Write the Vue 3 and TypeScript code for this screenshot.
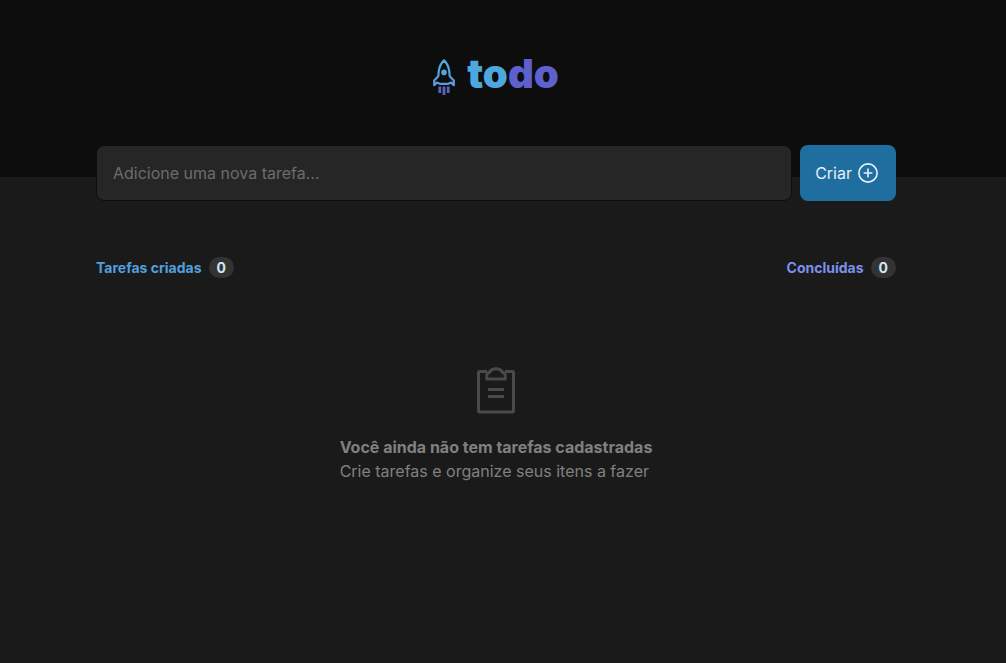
<script setup lang="ts">
import { computed, ref } from 'vue'

interface Task {
  id: number
  title: string
  done: boolean
}

const tasks = ref<Task[]>([])
const title = ref('')
const doneCount = computed(() => tasks.value.filter((task) => task.done).length)

function createTask(): void {
  const text = title.value.trim()
  if (!text) return
  tasks.value.push({ id: Date.now(), title: text, done: false })
  title.value = ''
}
</script>

<template>
  <div class="page">
    <header class="header">
      <svg class="rocket" viewBox="0 0 24 40" aria-hidden="true">
        <defs>
          <linearGradient id="rocket-fill" x1="0" y1="0" x2="0" y2="1">
            <stop offset="0" stop-color="#4ea8de" />
            <stop offset="1" stop-color="#5b9add" />
          </linearGradient>
        </defs>
        <path
          d="M12 3.400C9.400 6 7.200 10.200 6.700 14.500L6.300 19.200L2.200 23.600V28.200L4.800 25.600L7.800 26.800H16.200L19.200 25.600L21.800 28.200V23.600L17.700 19.200L17.300 14.500C16.800 10.200 14.600 6 12 3.400Z"
          fill="none"
          stroke="url(#rocket-fill)"
          stroke-width="2.200"
          stroke-linejoin="round"
        />
        <circle cx="12" cy="15.400" r="2.800" fill="#4ea8de" />
        <path d="M7.800 29.600V36M12 29.600V38M16.200 29.600V36" fill="none" stroke="#5763bd" stroke-width="2.800" />
      </svg>
      <h1 class="brand"><span class="brand-to">to</span><span class="brand-do">do</span></h1>
    </header>

    <main class="content">
      <form class="new-task" @submit.prevent="createTask">
        <input v-model="title" class="field" type="text" placeholder="Adicione uma nova tarefa..." aria-label="Adicione uma nova tarefa..." />
        <button class="create" type="submit">
          Criar
          <svg class="plus" viewBox="0 0 20 20" aria-hidden="true">
            <circle cx="10" cy="10" r="9.1" />
            <path d="M10 5.6V14.4M5.6 10H14.4" />
          </svg>
        </button>
      </form>

      <section class="tasks">
        <div class="summary">
          <p class="counter created">Tarefas criadas <span class="badge">{{ tasks.length }}</span></p>
          <p class="counter finished">Concluídas <span class="badge">{{ doneCount }}</span></p>
        </div>

        <div v-if="tasks.length === 0" class="empty">
          <svg class="clipboard" viewBox="0 0 56 56" aria-hidden="true">
            <path d="M19 8.500H12A1.500 1.500 0 0 0 10.500 10V47.500A1.500 1.500 0 0 0 12 49H44A1.500 1.500 0 0 0 45.500 47.500V10A1.500 1.500 0 0 0 44 8.500H37" />
            <path d="M18.800 16V12.500Q18.800 10 21.500 9.500A6.800 5.200 0 0 1 34.500 9.500Q37.200 10 37.200 12.500V16Z" />
            <path d="M20 26.500H36M20 33.500H36" />
          </svg>
          <p class="message"><strong>Você ainda não tem tarefas cadastradas</strong><br />Crie tarefas e organize seus itens a fazer</p>
        </div>
        <ul v-else class="list">
          <li v-for="task in tasks" :key="task.id">
            <label class="item"><input v-model="task.done" type="checkbox" /> {{ task.title }}</label>
          </li>
        </ul>
      </section>
    </main>
  </div>
</template>

<style>
body {
  margin: 0;
  background: #1a1a1a;
}
</style>

<style scoped>
.page {
  min-height: 100vh;
  background: #1a1a1a;
  color: #808080;
  font-family: Inter, "Liberation Sans", sans-serif;
  font-size: 16px;
  line-height: 24px;
}

.header,
.content {
  padding-right: 14px;
}

.header {
  display: flex;
  align-items: flex-end;
  justify-content: center;
  gap: 11px;
  box-sizing: border-box;
  padding-top: 51px;
  padding-right: 15px;
  padding-bottom: 80px;
  background: #0d0d0d;
}

.rocket {
  width: 24px;
  height: 40px;
}

.brand {
  margin: 0;
  font-size: 40px;
  line-height: 46px;
  font-weight: 900;
}

.brand-to {
  color: #4ea8de;
}

.brand-do {
  color: #5e60ce;
}

.new-task,
.tasks {
  max-width: 800px;
  margin: 0 auto;
}

.new-task {
  display: flex;
  gap: 8px;
  margin-top: -32px;
}

.field {
  flex: 1;
  min-width: 0;
  box-sizing: border-box;
  height: 56px;
  padding: 0 16px;
  border: 1px solid #0d0d0d;
  border-radius: 8px;
  background: #262626;
  color: #f2f2f2;
  font: inherit;
}

.field::placeholder {
  color: #6c6c6c;
  opacity: 1;
}

.create {
  display: flex;
  align-items: center;
  gap: 6px;
  height: 56px;
  padding: 0 18px 0 15px;
  border: 0;
  border-radius: 8px;
  background: #1e6f9f;
  color: #e8eefc;
  font: inherit;
  cursor: pointer;
}

.plus {
  width: 20px;
  height: 20px;
  fill: none;
  stroke: #e8eefc;
  stroke-width: 1.6;
}

.tasks {
  padding-top: 56px;
}

.summary {
  display: flex;
  justify-content: space-between;
}

.counter {
  display: flex;
  align-items: center;
  gap: 7px;
  margin: 0;
  font-size: 14px;
  line-height: 21px;
  font-weight: 700;
}

.created {
  color: #529fdc;
}

.finished {
  color: #7b90ea;
}

.badge {
  padding: 0 8px;
  border-radius: 999px;
  background: #333333;
  color: #cfe6f7;
}

.empty {
  display: flex;
  flex-direction: column;
  align-items: center;
  gap: 16px;
  padding: 85px 16px;
}

.clipboard {
  width: 56px;
  height: 56px;
  fill: none;
  stroke: #484a4b;
  stroke-width: 3;
  stroke-linejoin: round;
}

.message {
  margin: 0;
}

.list {
  margin: 24px 0;
  padding: 0;
  list-style: none;
}

.item {
  display: flex;
  gap: 12px;
  padding: 16px;
  color: #f2f2f2;
}
</style>
